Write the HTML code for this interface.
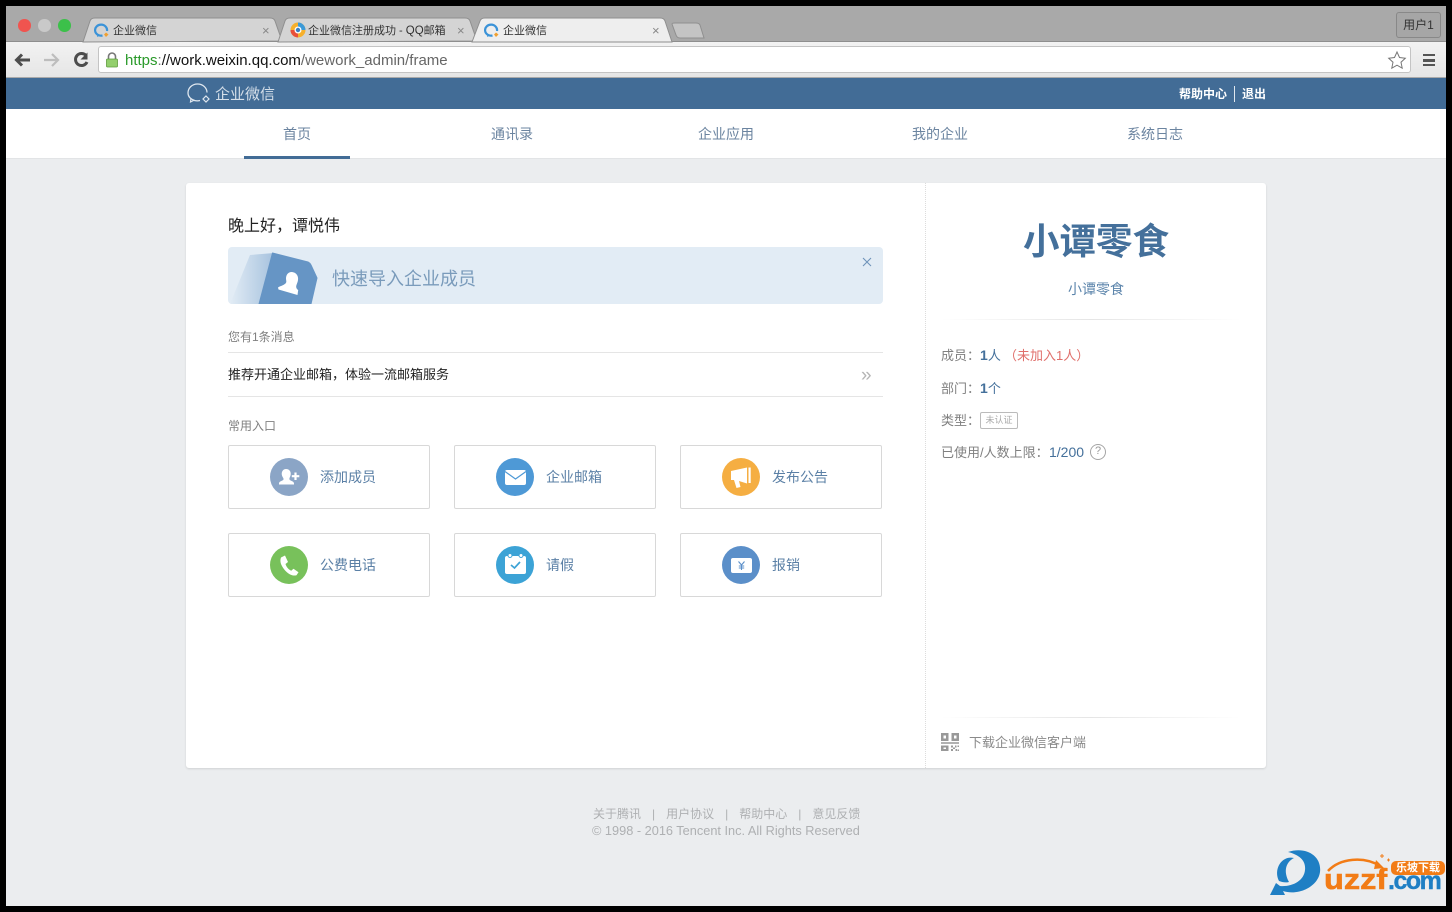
<!DOCTYPE html>
<html><head><meta charset="utf-8"><style>
*{box-sizing:border-box;margin:0;padding:0}
html,body{width:1452px;height:912px;overflow:hidden;background:#000}
body{font-family:"Liberation Sans","Noto Sans CJK SC",sans-serif;position:relative}
.a{position:absolute;white-space:nowrap}
.box{position:absolute;width:202px;height:64px;border:1px solid #d8d8d8;border-radius:2px;background:#fff}
.box svg{position:absolute;left:41px;top:12px}
.box span{position:absolute;left:91px;top:22px;font-size:14px;line-height:18px;color:#5b80a6}
.nav{position:absolute;top:125px;font-size:14px;line-height:18px;color:#6b84a0}
.tab{position:absolute;font-size:11px;line-height:14px;color:#333}
.x{position:absolute;font-size:13px;color:#888;line-height:14px}
</style></head><body>
<div class="a" style="left:6px;top:6px;width:1440px;height:900px;background:#ebedef;overflow:hidden"></div>
<!-- browser chrome -->
<div class="a" style="left:6px;top:6px;width:1440px;height:36px;background:#a9a9a9;border-bottom:1px solid #8e8e8e"></div>
<div class="a" style="left:6px;top:42px;width:1440px;height:36px;background:linear-gradient(#f2f2f2,#e6e6e6);border-bottom:1px solid #aaa"></div>
<div class="a" style="left:18px;top:19px;width:12.500px;height:12.500px;border-radius:50%;background:#f0544f"></div>
<div class="a" style="left:38px;top:19px;width:12.500px;height:12.500px;border-radius:50%;background:#c9c9c9"></div>
<div class="a" style="left:58px;top:19px;width:12.500px;height:12.500px;border-radius:50%;background:#3cc04a"></div>
<svg class="a" style="left:80px;top:16px" width="630" height="27" viewBox="0 0 630 27">
<path d="M3 26L10 5Q11 2 15 2H190Q194 2 195 5L202 25Z" fill="#d4d4d4" stroke="#8f8f8f"/>
<path d="M198 26L205 5Q206 2 210 2H385Q389 2 390 5L397 25Z" fill="#d4d4d4" stroke="#8f8f8f"/>
<path d="M392 26L400 5Q401 2 405 2H580Q584 2 585 5L592 26Z" fill="#eeeeee" stroke="#8f8f8f"/>
<path d="M592 8Q592 7 595 7H616Q619 7 620 9L624 22H600Q597 22 596 19Z" fill="#c4c4c4" stroke="#8f8f8f"/>
</svg>
<svg class="a" style="left:94px;top:23px" width="16" height="15" viewBox="0 0 16 15"><path d="M8.500 12.500A6 5.500 0 1 1 13 8" fill="none" stroke="#3b93d8" stroke-width="2.200"/><path d="M3.500 11l-.5 3 3-1.500z" fill="#3b93d8"/><path d="M12 9.500l2.500 2-2.500 2.500-2-2.500z" fill="#f0a030"/></svg>
<div class="tab" style="left:113px;top:24px">企业微信</div><div class="x" style="left:262px;top:24px">×</div>
<svg class="a" style="left:290px;top:22px" width="16" height="16" viewBox="0 0 16 16"><circle cx="8" cy="8" r="7.500" fill="#f6b02c"/><path d="M8 .5a7.500 7.500 0 0 1 7.500 7.500H8z" fill="#3b9ad8"/><path d="M.5 8a7.500 7.500 0 0 0 7.500 7.500V8z" fill="#e8503a"/><circle cx="8" cy="8" r="3.500" fill="#fff"/><circle cx="8" cy="8" r="2.200" fill="#3b7fc0"/></svg>
<div class="tab" style="left:308px;top:24px">企业微信注册成功 - <span style="font-size:11.500px">QQ</span>邮箱</div><div class="x" style="left:457px;top:24px">×</div>
<svg class="a" style="left:484px;top:23px" width="16" height="15" viewBox="0 0 16 15"><path d="M8.500 12.500A6 5.500 0 1 1 13 8" fill="none" stroke="#3b93d8" stroke-width="2.200"/><path d="M3.500 11l-.5 3 3-1.500z" fill="#3b93d8"/><path d="M12 9.500l2.500 2-2.500 2.500-2-2.500z" fill="#f0a030"/></svg>
<div class="tab" style="left:503px;top:24px">企业微信</div><div class="x" style="left:652px;top:24px">×</div>
<div class="a" style="left:1396px;top:12px;width:45px;height:26px;border:1px solid #888;border-radius:3px;background:#a6a6a6;font-size:12px;line-height:24px;text-align:center;color:#333">用户1</div>
<svg class="a" style="left:14px;top:51px" width="80" height="18" viewBox="0 0 80 18"><path d="M2 9h14M8 3.500L2.500 9l5.500 5.500" fill="none" stroke="#4d4d4d" stroke-width="3"/><path d="M44 9H30M38 3l6 6-6 6" fill="none" stroke="#bdbdbd" stroke-width="2.200"/><path d="M72 4.500A6 6 0 1 0 73 11" fill="none" stroke="#4d4d4d" stroke-width="3"/><path d="M73.500 1.500v7h-7z" fill="#4d4d4d"/></svg>
<div class="a" style="left:98px;top:46px;width:1313px;height:27px;background:#fff;border:1px solid #c4c4c4;border-radius:3px"></div>
<svg class="a" style="left:105px;top:52px" width="14" height="16" viewBox="0 0 14 16"><path d="M3.500 7V4.500a3.500 3.500 0 0 1 7 0V7" fill="none" stroke="#777" stroke-width="1.600"/><rect x="1.500" y="7" width="11" height="8" rx="1" fill="#93cf6d" stroke="#5f9c3e" stroke-width=".8"/></svg>
<div class="a" style="left:125px;top:52px;font-size:15px;line-height:18px;color:#111"><span style="color:#2a9a2a">https</span><span style="color:#777">:</span>//work.weixin.qq.com<span style="color:#666">/wework_admin/frame</span></div>
<svg class="a" style="left:1386px;top:49px" width="22" height="22" viewBox="0 0 22 22"><path d="M11 3l2.500 5.500 5.800.7-4.300 4 1.200 6-5.200-3-5.200 3 1.200-6-4.300-4 5.800-.7z" fill="#fff" stroke="#777"/></svg>
<div class="a" style="left:1423px;top:54px;width:12px;height:12px;border-top:2.500px solid #555;border-bottom:2.500px solid #555"></div>
<div class="a" style="left:1423px;top:59px;width:12px;height:2.500px;background:#555"></div>
<!-- app header -->
<div class="a" style="left:6px;top:78px;width:1440px;height:31px;background:#426c96"></div>
<svg class="a" style="left:186px;top:82px" width="26" height="24" viewBox="0 0 26 24"><path d="M14 18.500C8 20 2 16 2 11S6 2 11.500 2 21 6 21 10.500" fill="none" stroke="#dfe7ef" stroke-width="1.300"/><path d="M5 16l-.5 4 4-2" fill="none" stroke="#dfe7ef" stroke-width="1.200"/><path d="M20 14l3 3-3 3-3-3z" fill="none" stroke="#dfe7ef" stroke-width="1.200"/></svg>
<div class="a" style="left:215px;top:85px;font-size:15px;line-height:20px;color:#d5dfe9">企业微信</div>
<div class="a" style="left:1179px;top:85px;font-size:12px;line-height:18px;font-weight:bold;color:#fff">帮助中心</div>
<div class="a" style="left:1234px;top:86px;width:1px;height:16px;background:#dfe7ef"></div>
<div class="a" style="left:1242px;top:85px;font-size:12px;line-height:18px;font-weight:bold;color:#fff">退出</div>
<!-- nav -->
<div class="a" style="left:6px;top:109px;width:1440px;height:50px;background:#fff;border-bottom:1px solid #e2e4e6"></div>
<div class="a" style="left:244px;top:156px;width:106px;height:3px;background:#426c96"></div>
<div class="nav" style="left:283px">首页</div>
<div class="nav" style="left:491px">通讯录</div>
<div class="nav" style="left:698px">企业应用</div>
<div class="nav" style="left:912px">我的企业</div>
<div class="nav" style="left:1127px">系统日志</div>
<!-- card -->
<div class="a" style="left:186px;top:183px;width:1080px;height:585px;background:#fff;border-radius:3px;box-shadow:0 1px 2px rgba(0,0,0,.12)"></div>
<div class="a" style="left:925px;top:183px;width:0;height:585px;border-left:1px dotted #dcdcdc"></div>
<div class="a" style="left:228px;top:216px;font-size:16px;line-height:21px;color:#222">晚上好，谭悦伟</div>
<div class="a" style="left:228px;top:247px;width:655px;height:57px;background:#e2ecf5;border-radius:4px;overflow:hidden">
<svg width="110" height="57" viewBox="0 0 110 57" style="position:absolute;left:0;top:0"><defs><linearGradient id="g" x1="0" x2="1"><stop offset="0" stop-color="#e2ecf5"/><stop offset="1" stop-color="#a6c2de"/></linearGradient></defs><path d="M2 57L22 8 46 6 36 57Z" fill="url(#g)"/><path d="M31 57L44.500 6 80 15 Q82 16 83 18L89 31 83 57Z" fill="#6695c5" stroke="#6695c5" stroke-linejoin="round"/><path d="M64 25c4.500.5 6.500 4 6 8-.4 3-2 5-1.800 7 .2 2 2 3 2 3l-.7 5-19-5.500-.5-2c2-1.500 5.500-2 7.500-4 1.500-1.500 .5-3 .5-5 0-4 2.500-7 6.500-6.500z" fill="#fff"/></svg>
</div>
<div class="a" style="left:332px;top:267px;font-size:18px;line-height:24px;color:#7a9bbb">快速导入企业成员</div>
<svg class="a" style="left:862px;top:257px" width="10" height="10" viewBox="0 0 10 10"><path d="M1 1l8 8M9 1l-8 8" stroke="#6f94ba" stroke-width="1.100"/></svg>
<div class="a" style="left:228px;top:328px;font-size:12px;line-height:18px;color:#808080">您有1条消息</div>
<div class="a" style="left:228px;top:352px;width:655px;height:45px;border-top:1px solid #e5e5e5;border-bottom:1px solid #e5e5e5"></div>
<div class="a" style="left:228px;top:366px;font-size:13px;line-height:18px;color:#222">推荐开通企业邮箱，体验一流邮箱服务</div>
<div class="a" style="left:861px;top:367px;font-size:19px;line-height:18px;color:#b5b5b5">»</div>
<div class="a" style="left:228px;top:417px;font-size:12px;line-height:18px;color:#808080">常用入口</div>
<div class="box" style="left:228px;top:445px"><svg width="38" height="38" viewBox="0 0 38 38"><circle cx="19" cy="19" r="19" fill="#8ba5c6"/><path d="M16 11c3.500 0 5.500 3 4.500 6.500-.6 2-1.400 2.800-1 4 .5 1.500 4.500 1.500 4.500 4v1H9v-1c0-2.500 4-2.500 4.500-4 .4-1.200-.9-2-1.500-4-1-3.500 1-6.500 4-6.500z" fill="#fff"/><path d="M25.500 14.500v7.500M21.800 18.200h7.500" stroke="#fff" stroke-width="2.200"/></svg><span>添加成员</span></div>
<div class="box" style="left:454px;top:445px"><svg width="38" height="38" viewBox="0 0 38 38"><circle cx="19" cy="19" r="19" fill="#4e99d6"/><rect x="9" y="12" width="21" height="15" rx="2" fill="#fff"/><path d="M9 13.500l10.500 7.500 10.500-7.500" fill="none" stroke="#4e99d6" stroke-width="1.200"/></svg><span>企业邮箱</span></div>
<div class="box" style="left:680px;top:445px"><svg width="38" height="38" viewBox="0 0 38 38"><circle cx="19" cy="19" r="19" fill="#f5ae42"/><path d="M9 13l16-3.500v16L17 23l1.500 6-4 1-2.500-8H9z" fill="#fff"/><rect x="26.500" y="9.500" width="2.200" height="15.500" fill="#fff"/></svg><span>发布公告</span></div>
<div class="box" style="left:228px;top:533px"><svg width="38" height="38" viewBox="0 0 38 38"><circle cx="19" cy="19" r="19" fill="#78c15b"/><path d="M11 11.500l4-2 3 6.500-2.500 2c.8 2.800 2.800 5.300 5.700 6.700l2.300-2 5 3.500-2 3c-4 1.200-8.500-1.200-12-5.500S9.500 15.500 11 11.500z" fill="#fff"/></svg><span>公费电话</span></div>
<div class="box" style="left:454px;top:533px"><svg width="38" height="38" viewBox="0 0 38 38"><circle cx="19" cy="19" r="19" fill="#3ca3d6"/><rect x="9" y="10" width="21" height="18" rx="2" fill="#fff"/><circle cx="14" cy="9.500" r="2" fill="#fff" stroke="#3ca3d6"/><circle cx="25" cy="9.500" r="2" fill="#fff" stroke="#3ca3d6"/><path d="M15 19l3.500 3 5.500-6" fill="none" stroke="#3ca3d6" stroke-width="1.700"/></svg><span>请假</span></div>
<div class="box" style="left:680px;top:533px"><svg width="38" height="38" viewBox="0 0 38 38"><circle cx="19" cy="19" r="19" fill="#5b8fc9"/><rect x="9" y="12" width="21" height="15" rx="2" fill="#fff"/><path d="M16.500 15.500l3 3.500 3-3.500M19.500 19v5M16.800 20h5.400M16.800 22h5.400" fill="none" stroke="#5b8fc9" stroke-width="1.100"/></svg><span>报销</span></div>
<!-- side -->
<div class="a" style="left:926px;top:220px;width:340px;text-align:center;font-size:36.500px;line-height:44px;font-weight:bold;color:#44709b">小谭零食</div>
<div class="a" style="left:926px;top:280px;width:340px;text-align:center;font-size:14px;line-height:18px;color:#5b84ab">小谭零食</div>
<div class="a" style="left:941px;top:319px;width:300px;height:1px;background:linear-gradient(90deg,#fff,#e5e5e5 50%,#fff)"></div>
<div class="a" style="left:941px;top:347px;font-size:13px;line-height:18px;color:#808080">成员：<span style="color:#44709b"><b style="font-size:14px;line-height:14px">1</b>人</span></div>
<div class="a" style="left:1004px;top:347px;font-size:13px;line-height:18px;color:#e0706c">（未加入1人）</div>
<div class="a" style="left:941px;top:380px;font-size:13px;line-height:18px;color:#808080">部门：<span style="color:#44709b"><b style="font-size:14px;line-height:14px">1</b>个</span></div>
<div class="a" style="left:941px;top:412px;font-size:13px;line-height:18px;color:#808080">类型：</div>
<div class="a" style="left:980px;top:412px;width:38px;height:17px;border:1px solid #bbb;border-radius:2px;font-size:9px;line-height:15px;text-align:center;color:#aaa">未认证</div>
<div class="a" style="left:941px;top:444px;font-size:13px;line-height:18px;color:#808080">已使用/人数上限：</div>
<div class="a" style="left:1049px;top:443px;font-size:14px;line-height:18px;color:#44709b">1/200</div>
<div class="a" style="left:1090px;top:444px;width:16px;height:16px;border:1.500px solid #a5a5a5;border-radius:50%;font-size:11px;line-height:13px;text-align:center;color:#999">?</div>
<div class="a" style="left:941px;top:717px;width:300px;height:1px;background:linear-gradient(90deg,#fff,#e5e5e5 50%,#fff)"></div>
<svg class="a" style="left:941px;top:733px" width="18" height="18" viewBox="0 0 18 18" fill="#999"><path fill-rule="evenodd" d="M0 0h7.500v8H0zM2.500 2.500v3h2.500v-3zM10.500 0H18v8h-7.500zM13 2.500v3h2.500v-3zM0 9.300h18v1.400H0zM0 12.500h7.500V18H0zM2.500 14.500v1.500h2.500v-1.500zM10 12.500h2v2h-2zM14 12.500h1.500v2H14zM16.500 12.500H18v1.500h-1.500zM12 14.500h2v1.500h-2zM10 16h2v2h-2zM14.500 16h1.500v2h-1.500zM16.500 16.500H18V18h-1.500z"/></svg>
<div class="a" style="left:969px;top:734px;font-size:13px;line-height:18px;color:#8a8a8a">下载企业微信客户端</div>
<!-- footer -->
<div class="a" style="left:593px;top:806px;font-size:12px;line-height:17px;color:#aeb0b2">关于腾讯<span style="margin:0 11px">|</span>用户协议<span style="margin:0 11px">|</span>帮助中心<span style="margin:0 11px">|</span>意见反馈</div>
<div class="a" style="left:592px;top:822px;font-size:12.750px;line-height:17px;color:#aeb0b2">© 1998 - 2016 Tencent Inc. All Rights Reserved</div>
<!-- watermark -->
<svg class="a" style="left:1268px;top:849px" width="56" height="48" viewBox="0 0 56 48"><path d="M2 46l6-12 4 3C24 38 36 32 37 21 38 12 32 6 20 3 38-3 54 7 52 23 50 38 30 47 15 42l2 4z" fill="#1f7fc4"/><path d="M11 32C5 20 14 6 26 9 18 13 15 22 21 33 17 34 14 33 11 32z" fill="#1f7fc4"/></svg>
<div class="a" style="left:1324px;top:865px;font-size:29px;line-height:30px;font-weight:bold;color:#f27c16;transform:scaleX(1.12);transform-origin:0 50%;-webkit-text-stroke:.6px #f27c16">uzzf</div>
<div class="a" style="left:1388px;top:866px;font-size:25px;line-height:30px;font-weight:bold;color:#1f7fc4;letter-spacing:-1.500px;-webkit-text-stroke:.4px #1f7fc4">.com</div>
<div class="a" style="left:1391px;top:861px;width:54px;height:14px;background:#f27c16;border-radius:5px;font-size:11px;line-height:14px;font-weight:bold;text-align:center;color:#fff">乐坡下载</div>
<svg class="a" style="left:1326px;top:853px" width="66" height="20" viewBox="0 0 66 20"><path d="M2 18C14 5 38 3 54 13" fill="none" stroke="#f27c16" stroke-width="2.500"/><path d="M50 7l8 8-10 1z" fill="#f27c16"/><path d="M54 3h4M56 1v4M61 7h3M62.500 5.500v3" stroke="#f27c16"/></svg>
</body></html>
